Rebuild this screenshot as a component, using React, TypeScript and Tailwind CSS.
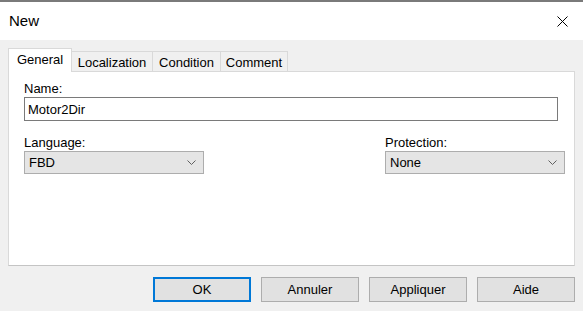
import React from 'react';

const font = "font-['Liberation_Sans',Arial,sans-serif]";

const Chevron: React.FC = () => (
  <svg width="9" height="6" viewBox="0 0 9 6" className="shrink-0">
    <path d="M0.5 0.5 L4.5 4.5 L8.5 0.5" fill="none" stroke="#606060" strokeWidth="1" />
  </svg>
);

const Select: React.FC<{ value: string }> = ({ value }) => (
  <div className="flex h-[23px] w-[180px] items-center justify-between border border-[#adadad] bg-[#e5e5e5] pr-[7px] pl-[4px] text-[13px] leading-[15px] text-black">
    <span>{value}</span>
    <Chevron />
  </div>
);

const Button: React.FC<{ label: string; primary?: boolean }> = ({ label, primary }) => (
  <button
    className={
      primary
        ? 'flex h-[25px] w-[98px] items-center justify-center border-2 border-[#0078d7] bg-[#e1e1e1] text-[13px] leading-[15px] text-black'
        : 'flex h-[25px] w-[98px] items-center justify-center border border-[#adadad] bg-[#e1e1e1] text-[13px] leading-[15px] text-black'
    }
  >
    {label}
  </button>
);

const tabs = [
  { label: 'Localization', w: 'w-[82px]' },
  { label: 'Condition', w: 'w-[69px]' },
  { label: 'Comment', w: 'w-[68px]' },
];

const App: React.FC = () => {
  return (
    <div className={`flex h-[311px] w-[583px] flex-col overflow-hidden bg-[#f0f0f0] ${font}`}>
      {/* window edge */}
      <div className="h-[2px] w-full bg-[#7a7a7a]" />

      {/* Title bar */}
      <div className="flex h-[38px] items-center justify-between bg-white pr-[15px] pl-[9px]">
        <span className="text-[15px] leading-[18px] text-black">New</span>
        <svg width="11" height="11" viewBox="0 0 11 11">
          <path d="M0.5 0.5 L10.5 10.5 M10.5 0.5 L0.5 10.5" stroke="#000" strokeWidth="1" />
        </svg>
      </div>

      {/* Body */}
      <div className="flex flex-1 flex-col px-[8px] pt-[8px]">
        {/* Tabs */}
        <div className="flex items-end">
          <div className="relative z-10 -mb-px flex h-[24px] w-[64px] items-start justify-center border border-b-0 border-[#d9d9d9] bg-white pt-[3px] text-[13px] leading-[15px] text-black">
            General
          </div>
          {tabs.map((t) => (
            <div
              key={t.label}
              className={`-ml-px flex h-[20px] ${t.w} items-center justify-center border border-b-0 border-[#d9d9d9] bg-[#f0f0f0] pt-[1px] text-[13px] leading-[15px] text-black`}
            >
              {t.label}
            </div>
          ))}
        </div>

        {/* Panel */}
        <div className="flex h-[195px] flex-col border border-[#d9d9d9] border-b-[#c4c4c4] bg-white pt-[9px] pl-[15px] text-[13px] leading-[15px] text-black">
          <label>Name:</label>
          <div className="mt-[1px] flex h-[24px] w-[534px] items-center border border-[#7a7a7a] bg-white px-[3px]">
            Motor2Dir
          </div>

          <div className="mt-[14px] flex justify-between pr-[9px]">
            <div className="flex flex-col">
              <label>Language:</label>
              <div className="mt-[1px]">
                <Select value="FBD" />
              </div>
            </div>
            <div className="flex flex-col">
              <label>Protection:</label>
              <div className="mt-[1px]">
                <Select value="None" />
              </div>
            </div>
          </div>
        </div>

        {/* Buttons */}
        <div className="mt-[11px] flex justify-end gap-[10px]">
          <Button label="OK" primary />
          <Button label="Annuler" />
          <Button label="Appliquer" />
          <Button label="Aide" />
        </div>
      </div>
    </div>
  );
};

export default App;
